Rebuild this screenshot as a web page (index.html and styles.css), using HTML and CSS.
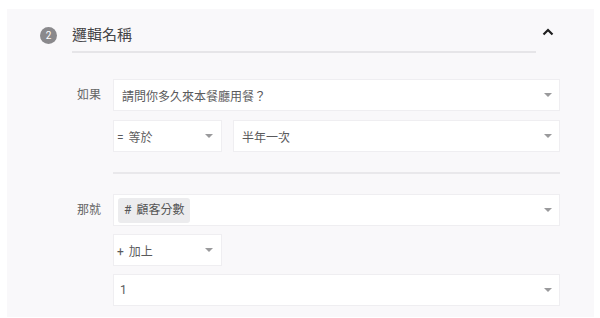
FILE: index.html
```html
<!DOCTYPE html>
<html lang="zh-Hant">
<head>
<meta charset="utf-8">
<link rel="stylesheet" href="styles.css">
</head>
<body>
<div class="panel">
  <div class="header">
    <span class="step">2</span>
    <div class="title">邏輯名稱</div>
    <div class="toggle">
      <svg width="12" height="8" viewBox="0 0 12 8"><path d="M1.5 6.5 L6 2 L10.5 6.5" fill="none" stroke="#1f1f1f" stroke-width="2.2"/></svg>
    </div>
  </div>

  <div class="group">
    <div class="label">如果</div>
    <div class="fields">
      <div class="field"><span class="txt">請問你多久來本餐廳用餐？</span><span class="caret"></span></div>
      <div class="row">
        <div class="field select"><span class="txt"><span class="sym">=</span>等於</span><span class="caret"></span></div>
        <div class="field grow"><span class="txt">半年一次</span><span class="caret"></span></div>
      </div>
    </div>
  </div>

  <div class="divider"></div>

  <div class="group">
    <div class="label">那就</div>
    <div class="fields">
      <div class="field tagged"><span class="tag"><span class="sym">#</span>顧客分數</span><span class="caret"></span></div>
      <div class="field select"><span class="txt"><span class="sym">+</span>加上</span><span class="caret"></span></div>
      <div class="field plain"><span class="txt">1</span><span class="caret"></span></div>
    </div>
  </div>
</div>
</body>
</html>
```

FILE: styles.css
```css
html, body {
  margin: 0;
  padding: 0;
  background: #ffffff;
}
body {
  font-family: Roboto, "Noto Sans CJK TC", "Noto Sans", sans-serif;
  font-size: 12px;
  color: #5a5a5c;
}
.panel {
  margin: 9px 6px 0 7px;
  height: 308px;
  background: #f9f8fa;
  box-sizing: border-box;
  padding: 14px 34px 0 0;
}
.header {
  display: flex;
  align-items: flex-start;
  padding-left: 33px;
}
.step {
  width: 17px;
  height: 17px;
  border-radius: 50%;
  background: #8a898c;
  color: #fff;
  font-size: 10px;
  line-height: 17px;
  text-align: center;
  margin-top: 4px;
  flex: none;
}
.title {
  flex: 1;
  margin-left: 15px;
  font-size: 15px;
  line-height: 24px;
  color: #454547;
  padding-bottom: 4px;
  border-bottom: 2px solid #e6e5e8;
}
.toggle {
  width: 24px;
  display: flex;
  justify-content: center;
  padding-top: 5px;
}
.toggle svg { display: block; }
.group {
  display: flex;
  padding-left: 70px;
  margin-top: 26px;
}
.divider + .group { margin-top: 20px; }
.label {
  width: 36px;
  flex: none;
  line-height: 32px;
  color: #666;
}
.fields {
  flex: 1;
  display: flex;
  flex-direction: column;
  gap: 9px;
}
.group + .divider + .group .fields { gap: 8px; }
.row {
  display: flex;
  gap: 11px;
}
.field {
  height: 32px;
  box-sizing: border-box;
  background: #fff;
  border: 1px solid #efeef1;
  display: flex;
  align-items: center;
  justify-content: space-between;
  padding: 0 7px 0 8px;
}
.field.select {
  width: 109px;
  padding: 0 8px 0 3px;
}
.field.grow { flex: 1; }
.field.plain { padding-left: 6px; }
.field.tagged { padding-left: 4px; }
.tag {
  background: #ececee;
  border-radius: 3px;
  height: 25px;
  line-height: 25px;
  padding: 0 6px;
  color: #555;
}
.sym {
  margin-right: 5px;
}
.caret {
  width: 0;
  height: 0;
  border-left: 4px solid transparent;
  border-right: 4px solid transparent;
  border-top: 4px solid #9a9a9c;
}
.divider {
  margin: 20px 0 0 106px;
  height: 2px;
  background: #e9e8eb;
}
```
